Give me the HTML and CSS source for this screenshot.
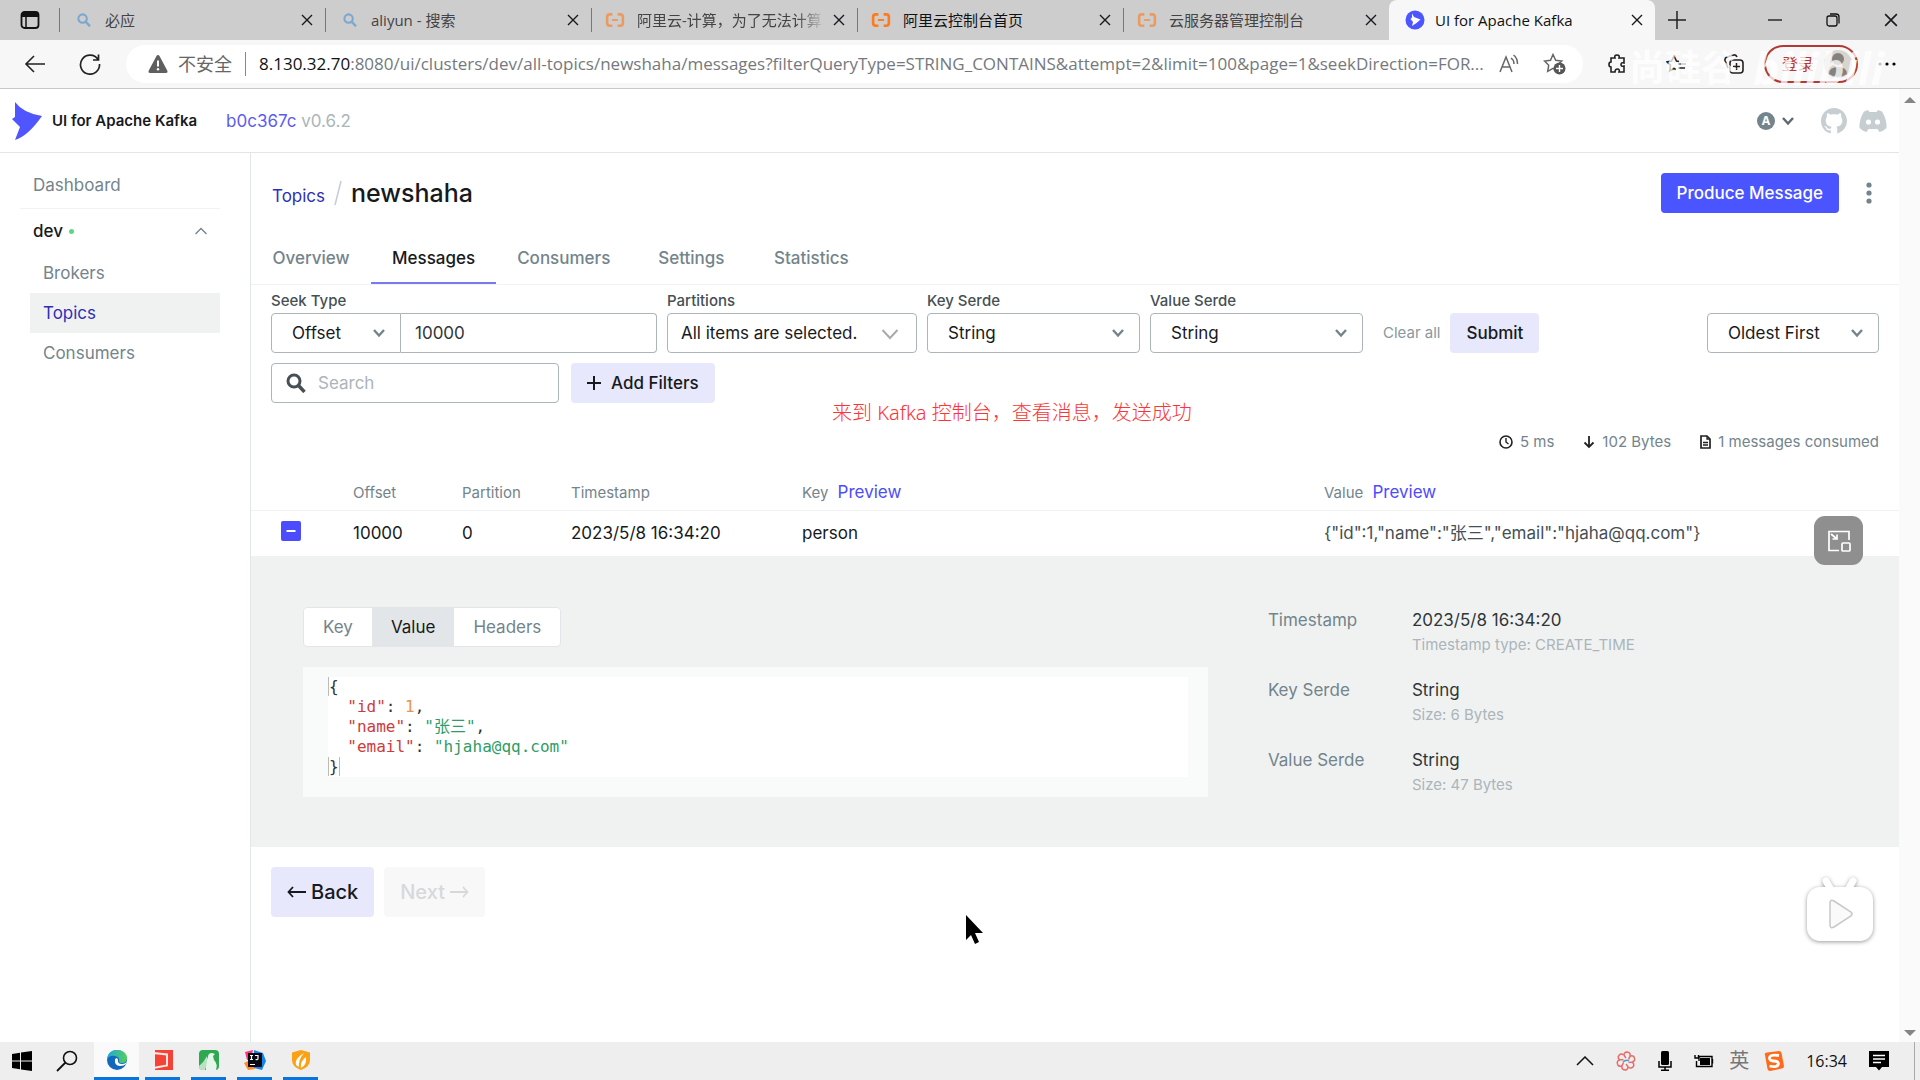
FILE: index.html
```
<!DOCTYPE html>
<html lang="en">
<head>
    <meta charset="UTF-8">
    <meta name="viewport" content="width=device-width, initial-scale=1.0">
    <title>UI for Apache Kafka</title>
    <link rel="stylesheet" href="styles.css">
</head>
<body>
    <!-- shared icons -->
    <svg class="sprite" width="0" height="0" aria-hidden="true">
        <symbol id="i-close" viewBox="0 0 12 12"><path d="M1 1l10 10M11 1L1 11" fill="none" stroke="currentColor" stroke-width="1.4"/></symbol>
        <symbol id="i-chevron" viewBox="0 0 14 10"><path d="M2 2l5 5.5L12 2" fill="none" stroke="currentColor" stroke-width="2.4"/></symbol>
        <symbol id="i-search" viewBox="0 0 20 20"><circle cx="8" cy="8" r="6" fill="none" stroke="currentColor" stroke-width="3"/><path d="M12.5 12.5L18.5 19" stroke="currentColor" stroke-width="3.4"/></symbol>
        <symbol id="i-aliyun" viewBox="0 0 22 16"><path d="M8 1.5H5Q2 1.500 2 4.500v7q0 3 3 3h3M14 1.500h3q3 0 3 3v7q0 3-3 3h-3" fill="none" stroke="currentColor" stroke-width="3"/><path d="M7.500 8h7" stroke="currentColor" stroke-width="2.200"/></symbol>
    </svg>

    <div class="tab-strip">
        <button class="tab-menu" aria-label="Tab actions">
            <svg width="20" height="20" viewBox="0 0 20 20"><rect x="1.500" y="2" width="17" height="16" rx="3" fill="none" stroke="#111" stroke-width="1.800"/><path d="M1.500 4.500Q1.500 2 4 2h12q2.500 0 2.500 2.500V7h-17z" fill="#111"/><path d="M6 7v11" stroke="#111" stroke-width="1.500"/></svg>
        </button>
        <div class="tab">
            <svg class="tab-icon blue" width="14" height="14"><use href="#i-search"/></svg>
            <span class="tab-title">必应</span>
            <button class="tab-close" aria-label="Close"><svg width="12" height="12"><use href="#i-close"/></svg></button>
        </div>
        <div class="tab">
            <svg class="tab-icon blue" width="14" height="14"><use href="#i-search"/></svg>
            <span class="tab-title">aliyun - 搜索</span>
            <button class="tab-close" aria-label="Close"><svg width="12" height="12"><use href="#i-close"/></svg></button>
        </div>
        <div class="tab">
            <svg class="tab-icon orange faded" width="20" height="14"><use href="#i-aliyun"/></svg>
            <span class="tab-title fade-end">阿里云-计算，为了无法计算</span>
            <button class="tab-close" aria-label="Close"><svg width="12" height="12"><use href="#i-close"/></svg></button>
        </div>
        <div class="tab">
            <svg class="tab-icon orange" width="20" height="14"><use href="#i-aliyun"/></svg>
            <span class="tab-title dark">阿里云控制台首页</span>
            <button class="tab-close" aria-label="Close"><svg width="12" height="12"><use href="#i-close"/></svg></button>
        </div>
        <div class="tab">
            <svg class="tab-icon orange faded" width="20" height="14"><use href="#i-aliyun"/></svg>
            <span class="tab-title">云服务器管理控制台</span>
            <button class="tab-close" aria-label="Close"><svg width="12" height="12"><use href="#i-close"/></svg></button>
        </div>
        <div class="tab active">
            <svg class="tab-icon" width="20" height="20" viewBox="0 0 20 20"><circle cx="10" cy="10" r="9.500" fill="#4c55ff"/><path d="M7 3.500l2 3.500 6.500 2.500-4 3.500L7 16l1-4-2.500-3L7 7.500z" fill="#fff"/></svg>
            <span class="tab-title dark">UI for Apache Kafka</span>
            <button class="tab-close" aria-label="Close"><svg width="12" height="12"><use href="#i-close"/></svg></button>
        </div>
        <button class="new-tab" aria-label="New tab"><svg width="18" height="18" viewBox="0 0 18 18"><path d="M9 0v18M0 9h18" stroke="#222" stroke-width="1.500"/></svg></button>
        <div class="window-controls">
            <button aria-label="Minimize"><svg width="14" height="14" viewBox="0 0 14 14"><path d="M0 7h14" stroke="#111" stroke-width="1.300"/></svg></button>
            <button aria-label="Restore"><svg width="14" height="14" viewBox="0 0 14 14"><rect x="1" y="3" width="10" height="10" rx="2" fill="none" stroke="#111" stroke-width="1.300"/><path d="M4 1h6q3 0 3 3v6.500" fill="none" stroke="#111" stroke-width="1.300"/></svg></button>
            <button aria-label="Close window"><svg width="14" height="14"><use href="#i-close"/></svg></button>
        </div>
    </div>

    <div class="toolbar">
        <button aria-label="Back"><svg width="22" height="20" viewBox="0 0 22 20"><path d="M10 2L2 10l8 8M2 10h19" fill="none" stroke="#222" stroke-width="1.600"/></svg></button>
        <button aria-label="Refresh"><svg width="22" height="22" viewBox="0 0 22 22"><path d="M19 6.500A9.500 9.500 0 1 0 20.500 11M19.500 1.500v5.500h-5.500" fill="none" stroke="#222" stroke-width="1.700"/></svg></button>
        <div class="address">
            <svg width="20" height="18" viewBox="0 0 20 18"><path d="M10 0q1 0 1.500 1l8 15q.5 2-1.500 2H2q-2 0-1.500-2l8-15Q9 0 10 0z" fill="#5f5f5f"/><path d="M10 5.500v6" stroke="#fff" stroke-width="2"/><circle cx="10" cy="14.300" r="1.200" fill="#fff"/></svg>
            <span class="insecure">不安全</span>
            <span class="url"><b>8.130.32.70</b>:8080/ui/clusters/dev/all-topics/newshaha/messages?filterQueryType=STRING_CONTAINS&amp;attempt=2&amp;limit=100&amp;page=1&amp;seekDirection=FOR...</span>
            <div class="address-actions">
                <button aria-label="Read aloud"><svg width="20" height="20" viewBox="0 0 20 20"><path d="M1 18L7 3l6 15M3 13h8M12 4q3 2 3 6M14.500 1q4 3 4 9" fill="none" stroke="#666" stroke-width="1.500"/></svg></button>
                <button aria-label="Add to favorites"><svg width="23" height="22" viewBox="0 0 23 22"><path d="M10 1.500l2.700 5.700 6 .8-4.400 4.300 1 6-5.300-2.900-5.300 2.900 1-6L1.500 8l6-.8z" fill="none" stroke="#666" stroke-width="1.500"/><circle cx="16.500" cy="15.500" r="6" fill="#555"/><path d="M16.500 12v7M13 15.500h7" stroke="#fff" stroke-width="1.400"/></svg></button>
            </div>
        </div>
        <div class="toolbar-actions">
            <button aria-label="Extensions"><svg width="20" height="20" viewBox="0 0 20 20"><path d="M3 4h4q-1-3 2-3t2 3h5v5q-3-1-3 1.500t3 1.500v6h-5q1-3-1.500-3T7 18H3v-5q-2 0-2-2.500T3 8z" fill="none" stroke="#222" stroke-width="1.600"/></svg></button>
            <button aria-label="Favorites"><svg width="20" height="20" viewBox="0 0 20 20"><path d="M13 7.500L10.500 7 8 2 5.500 7 1 7.800l3.500 3.500-.8 5.500L8 14.500l2 1M12 10h8M12 14h7" fill="none" stroke="#222" stroke-width="1.600"/></svg></button>
            <button aria-label="Collections"><svg width="20" height="20" viewBox="0 0 20 20"><path d="M4 14L1 6.500Q.5 4 3 3l7-2q2-.5 3 2" fill="none" stroke="#222" stroke-width="1.600"/><rect x="6" y="6" width="13" height="13" rx="3" fill="none" stroke="#222" stroke-width="1.600"/><path d="M12.500 9v7M9 12.500h7" stroke="#222" stroke-width="1.500"/></svg></button>
            <button class="login">登录 <svg width="28" height="30" viewBox="0 0 28 30"><circle cx="14" cy="15" r="14" fill="#d8d4d0"/><circle cx="14" cy="10" r="6" fill="#85817d"/><path d="M5 25q0-7 9-7t9 7q-9 6-18 0z" fill="#85817d"/></svg></button>
            <button aria-label="More"><svg width="18" height="4" viewBox="0 0 18 4"><circle cx="2" cy="2" r="1.600"/><circle cx="9" cy="2" r="1.600"/><circle cx="16" cy="2" r="1.600"/></svg></button>
        </div>
        <div class="watermark"><span>尚硅谷</span><i>bilibili</i></div>
    </div>

    <div class="viewport">
        <div class="page">
            <header class="navbar">
                <a class="brand" href="#">
                    <svg width="30" height="38" viewBox="0 0 30 38"><path d="M3 0q8 11 27 14Q16 34 3 38l5-13-8-8 3-2z" fill="#4f56ff"/></svg>
                    UI for Apache Kafka
                </a>
                <div class="version"><a href="#">b0c367c</a> v0.6.2</div>
                <div class="navbar-links">
                    <button class="theme" aria-label="Theme"><span>A</span><svg width="14" height="10"><use href="#i-chevron"/></svg></button>
                    <a href="#" aria-label="GitHub"><svg width="26" height="26" viewBox="0 0 16 16"><path fill="#c7ced1" d="M8 0C3.580 0 0 3.580 0 8c0 3.540 2.290 6.530 5.470 7.590.4.070.55-.17.55-.38 0-.19-.01-.82-.01-1.490-2.010.37-2.530-.49-2.690-.94-.09-.23-.48-.94-.82-1.130-.28-.15-.68-.52-.01-.53.63-.01 1.080.58 1.230.82.72 1.210 1.870.87 2.330.66.07-.52.28-.87.51-1.070-1.780-.2-3.640-.89-3.640-3.950 0-.87.31-1.590.82-2.150-.08-.2-.36-1.020.08-2.120 0 0 .67-.21 2.200.82.64-.18 1.320-.27 2-.27s1.360.09 2 .27c1.530-1.040 2.200-.82 2.200-.82.44 1.100.16 1.920.08 2.120.51.56.82 1.270.82 2.150 0 3.070-1.870 3.750-3.650 3.950.29.25.54.73.54 1.480 0 1.070-.01 1.930-.01 2.200 0 .21.15.46.55.38A8 8 0 0 0 16 8c0-4.420-3.580-8-8-8z"/></svg></a>
                    <a href="#" aria-label="Discord"><svg width="28" height="24" viewBox="0 0 28 24"><path d="M9 1L5 2.500Q0 10 .5 19q3 3 7 4l2-3h9l2 3q4-1 7-4Q28 10 23 2.500L19 1l-1.500 2h-7z" fill="#c7ced1"/><circle cx="9.500" cy="13" r="2.600" fill="#fff"/><circle cx="18.500" cy="13" r="2.600" fill="#fff"/></svg></a>
                </div>
            </header>

            <div class="layout">
                <nav class="sidebar">
                    <a class="dashboard" href="#">Dashboard</a>
                    <button class="cluster">dev <span class="status"></span>
                        <svg width="14" height="8" viewBox="0 0 14 8"><path d="M1.500 7L7 1.500 12.500 7" fill="none" stroke="#73848c" stroke-width="1.400"/></svg>
                    </button>
                    <a class="item" href="#">Brokers</a>
                    <a class="item current" href="#">Topics</a>
                    <a class="item" href="#">Consumers</a>
                </nav>

                <main>
                    <div class="heading">
                        <a href="#">Topics</a>
                        <svg class="slash" width="8" height="26" viewBox="0 0 8 26"><path d="M7 1L1 25" stroke="#c7ced1" stroke-width="1.500"/></svg>
                        <h1>newshaha</h1>
                        <button class="btn primary">Produce Message</button>
                        <button class="kebab" aria-label="Actions"><svg width="6" height="22" viewBox="0 0 6 22"><g fill="#73848c"><circle cx="3" cy="3" r="2.600"/><circle cx="3" cy="11" r="2.600"/><circle cx="3" cy="19" r="2.600"/></g></svg></button>
                    </div>

                    <nav class="topic-tabs">
                        <a href="#">Overview</a>
                        <a class="current" href="#">Messages</a>
                        <a href="#">Consumers</a>
                        <a href="#">Settings</a>
                        <a href="#">Statistics</a>
                    </nav>

                    <div class="filters">
                        <div class="field">
                            <label for="seek">Seek Type</label>
                            <div class="seek">
                                <div class="select seek-type"><select id="seek"><option>Offset</option></select><svg width="14" height="10"><use href="#i-chevron"/></svg></div>
                                <input type="text" value="10000" aria-label="Offset">
                            </div>
                        </div>
                        <div class="field">
                            <label for="partitions">Partitions</label>
                            <div class="select partitions"><select id="partitions"><option>All items are selected.</option></select><svg width="18" height="12" viewBox="0 0 18 12"><path d="M1.500 2L9 10l7.500-8" fill="none" stroke="#aaa" stroke-width="2"/></svg></div>
                        </div>
                        <div class="field">
                            <label for="key-serde">Key Serde</label>
                            <div class="select serde"><select id="key-serde"><option>String</option></select><svg width="14" height="10"><use href="#i-chevron"/></svg></div>
                        </div>
                        <div class="field">
                            <label for="value-serde">Value Serde</label>
                            <div class="select serde"><select id="value-serde"><option>String</option></select><svg width="14" height="10"><use href="#i-chevron"/></svg></div>
                        </div>
                        <button class="clear">Clear all</button>
                        <button class="btn">Submit</button>
                        <div class="select order"><select aria-label="Order"><option>Oldest First</option></select><svg width="14" height="10"><use href="#i-chevron"/></svg></div>
                    </div>

                    <div class="search-row">
                        <div class="search">
                            <svg width="20" height="20"><use href="#i-search"/></svg>
                            <input type="text" placeholder="Search" aria-label="Search">
                        </div>
                        <button class="btn add"><svg width="14" height="14" viewBox="0 0 14 14"><path d="M7 0v14M0 7h14" stroke="#171a1c" stroke-width="2"/></svg>Add Filters</button>
                    </div>

                    <div class="metrics">
                        <span><svg width="14" height="14" viewBox="0 0 14 14"><circle cx="7" cy="7" r="6" fill="none" stroke="#222" stroke-width="1.600"/><path d="M7 3v4l2.500 2" fill="none" stroke="#222" stroke-width="1.400"/></svg>5 ms</span>
                        <span><svg width="12" height="14" viewBox="0 0 12 14"><path d="M6 1v11M1.500 7.500L6 12l4.500-4.500" fill="none" stroke="#222" stroke-width="1.800"/></svg>102 Bytes</span>
                        <span><svg width="11" height="14" viewBox="0 0 11 14"><path d="M1 1h6l3 3v9H1z" fill="none" stroke="#222" stroke-width="1.700"/><path d="M7 1v3h3M3 7.500h5M3 10h5" fill="none" stroke="#222" stroke-width="1.300"/></svg>1 messages consumed</span>
                    </div>

                    <table class="messages">
                        <colgroup><col class="c-toggle"><col class="c-offset"><col class="c-offset"><col class="c-time"><col class="c-key"><col></colgroup>
                        <thead>
                            <tr><th></th><th>Offset</th><th>Partition</th><th>Timestamp</th><th>Key <button class="preview">Preview</button></th><th>Value <button class="preview">Preview</button></th></tr>
                        </thead>
                        <tbody>
                            <tr>
                                <td class="toggle-cell"><button class="toggle" aria-label="Collapse"><svg width="20" height="20" viewBox="0 0 20 20"><rect width="20" height="20" rx="2" fill="#4c4cff"/><path d="M5.500 10h9" stroke="#fff" stroke-width="2"/></svg></button></td>
                                <td>10000</td>
                                <td>0</td>
                                <td>2023/5/8 16:34:20</td>
                                <td>person</td>
                                <td class="json">{"id":1,"name":"张三","email":"hjaha@qq.com"}</td>
                            </tr>
                            <tr>
                                <td class="detail" colspan="6">
                                    <div class="detail-grid">
                                        <section>
                                            <div class="switch">
                                                <button>Key</button><button class="on">Value</button><button>Headers</button>
                                            </div>
                                            <div class="editor">
                                                <div class="code">
                                                    <div class="line"><span class="caret">{</span></div>
                                                    <div class="line indent"><span class="k">"id"</span><span>: </span><span class="n">1</span><span>,</span></div>
                                                    <div class="line indent"><span class="k">"name"</span><span>: </span><span class="s">"张三"</span><span>,</span></div>
                                                    <div class="line indent"><span class="k">"email"</span><span>: </span><span class="s">"hjaha@qq.com"</span></div>
                                                    <div class="line"><span class="caret end">}</span></div>
                                                </div>
                                            </div>
                                        </section>
                                        <dl class="meta">
                                            <dt>Timestamp</dt><dd>2023/5/8 16:34:20<small>Timestamp type: CREATE_TIME</small></dd>
                                            <dt>Key Serde</dt><dd>String<small>Size: 6 Bytes</small></dd>
                                            <dt>Value Serde</dt><dd>String<small>Size: 47 Bytes</small></dd>
                                        </dl>
                                    </div>
                                </td>
                            </tr>
                        </tbody>
                    </table>

                    <div class="pagination">
                        <button class="btn large"><svg width="19" height="12" viewBox="0 0 19 12"><path d="M6 1L1.500 6 6 11M2 6h17" fill="none" stroke="currentColor" stroke-width="1.800"/></svg>Back</button>
                        <button class="btn large" disabled>Next<svg width="19" height="12" viewBox="0 0 19 12"><path d="M13 1l4.500 5-4.500 5M17 6H0" fill="none" stroke="currentColor" stroke-width="1.800"/></svg></button>
                    </div>
                </main>
            </div>
        </div>

        <div class="scrollbar">
            <svg width="12" height="6" viewBox="0 0 12 6"><path d="M0 6l6-6 6 6z" fill="#858585"/></svg>
            <svg width="12" height="6" viewBox="0 0 12 6"><path d="M0 0l6 6 6-6z" fill="#858585"/></svg>
        </div>
    </div>

    <footer class="taskbar">
        <button aria-label="Start"><svg width="20" height="20" viewBox="0 0 20 20"><path d="M0 3l8-1.200v7.700H0zM9 1.600L20 0v9.500H9zM0 10.500h8v7.700L0 17zM9 10.500h11V20L9 18.400z"/></svg></button>
        <button class="find" aria-label="Search"><svg width="22" height="22" viewBox="0 0 22 22"><circle cx="14" cy="8" r="6.500" fill="none" stroke="#111" stroke-width="1.600"/><path d="M9.500 12.500L1 21" stroke="#111" stroke-width="1.800"/></svg></button>
        <button class="app front" aria-label="Edge"><svg width="20" height="20" viewBox="0 0 20 20"><defs><linearGradient id="edge" x1="0" y1="0" x2="1" y2="0"><stop offset="0" stop-color="#20a7dc"/><stop offset="1" stop-color="#53cf58"/></linearGradient></defs><circle cx="10" cy="10" r="10" fill="#1268bd"/><path d="M0 9Q1 0 10 0q9 0 10 8 0 5-5 5-3 0-3-2 1-4-4-5Q3 5 0 9z" fill="url(#edge)"/><path d="M8 9q-1 7 5 7 4 0 6-2l1-3q-1 3-5 3-4 0-4-3 0-2-1-3z" fill="#fff"/></svg></button>
        <button class="app" aria-label="Reader"><svg width="20" height="20" viewBox="0 0 20 20"><path d="M2 0h18v20H2z" fill="#f44336"/><path d="M0 3l14 1.500v11L0 18" fill="none" stroke="#ffe9e4" stroke-width="2"/></svg></button>
        <button class="app" aria-label="Editor"><svg width="20" height="20" viewBox="0 0 20 20"><rect width="20" height="20" rx="4" fill="#2fa852"/><path d="M9 7q0-4 4-4l3 1-2 2 1 4q4 4 2 10H7q-1-7 2-13z" fill="#e6f5ea"/><path d="M0 16Q5 12 8 6q1 5-2 14H3q-3 0-3-4z" fill="#b9e2c5"/></svg></button>
        <button class="app" aria-label="IDE"><svg width="22" height="20" viewBox="0 0 22 20"><path d="M1 2l8-2-2 9-4 1z" fill="#ff3680"/><path d="M10 0l9 3 3 8-4 9-8-2z" fill="#1685e8"/><path d="M0 13l6-3 5 9-7 1z" fill="#ff8b22"/><rect x="4" y="3" width="14" height="14" fill="#0a0a14"/><path d="M6 5.500h3M7.500 5.500v4M6 9.500h3M11 5.500h3v3q0 1.500-2.500 1M6 14.500h5" fill="none" stroke="#fff" stroke-width="1.200"/></svg></button>
        <button class="app" aria-label="Shield"><svg width="18" height="20" viewBox="0 0 18 20"><path d="M9 0l9 2.500V10q0 7-9 10-9-3-9-10V2.500z" fill="#fba116"/><path d="M12 3Q2 9 4 15l3 2Q6 10 12 3zM14 7q-6 4-5 11 6-3 5-11z" fill="#fff"/></svg></button>
        <div class="tray">
            <svg width="18" height="10" viewBox="0 0 18 10"><path d="M1 9l8-8 8 8" fill="none" stroke="#111" stroke-width="1.500"/></svg>
            <svg class="flower" width="20" height="20" viewBox="0 0 20 20"><g fill="none" stroke="#e86b65" stroke-width="1.500"><path id="petal" d="M10 7q-4-4 0-6 5 0 4 4"/><use href="#petal" transform="rotate(60 10 10)"/><use href="#petal" transform="rotate(120 10 10)"/><use href="#petal" transform="rotate(180 10 10)"/><use href="#petal" transform="rotate(240 10 10)"/><use href="#petal" transform="rotate(300 10 10)"/></g><path d="M7 11q3-3 6-1" stroke="#4a9ad8" stroke-width="1.500" fill="none"/></svg>
            <svg width="14" height="20" viewBox="0 0 14 20"><rect x="3" width="8" height="14" rx="1.500"/><path d="M1 10v6h12v-6M7 16v3M3 19.200h8" fill="none" stroke="#000" stroke-width="1.500"/></svg>
            <svg width="20" height="14" viewBox="0 0 20 14"><rect x="6" y="4" width="10" height="7"/><path d="M5 7V2.500h13v10H5M18.500 5v4.500M2.500 7v5.500H5M1 1v3h3.500V1" fill="none" stroke="#000" stroke-width="1.400"/></svg>
            <span class="ime">英</span>
            <svg width="20" height="20" viewBox="0 0 20 20"><path d="M1 4Q0 2 3 1.500L15 0q2 0 2.500 2L20 15q0 2-2 2.500L6 20q-2 0-2.500-2z" fill="#ff6a1c"/><path d="M15 4.500Q5 3 5.500 7.500 6 10 10 10t4.500 2.500Q14 17 5.500 15" fill="none" stroke="#fff" stroke-width="2.800"/></svg>
            <time>16:34</time>
            <svg width="20" height="20" viewBox="0 0 20 20"><path d="M0 0h20v16h-7l-3 3.500L7 16H0z"/><path d="M4 4.500h12M4 8h12M4 11.500h8" stroke="#fff" stroke-width="1.300"/></svg>
        </div>
    </footer>

    <p class="caption">来到 Kafka 控制台，查看消息，发送成功</p>
    <button class="pip" aria-label="Picture in picture"><svg width="24" height="22" viewBox="0 0 24 22"><path d="M12 20.500H2V1.500h20V10M4 4l6 5M10 4.500V9H5.500" fill="none" stroke="#fff" stroke-width="1.700"/><rect x="15" y="13" width="8" height="8" rx="1" fill="none" stroke="#fff" stroke-width="1.700"/></svg></button>
    <svg class="bili" width="76" height="76" viewBox="0 0 76 76"><path d="M24 11l4 7M51 11l-4 7" stroke="#fff" stroke-width="7" stroke-linecap="round"/><rect x="5" y="17" width="66" height="54" rx="13" fill="#fff"/><path d="M28 33q0-4 4-2l17 11q2 2 0 4L32 57q-4 2-4-2z" fill="#fafafa" stroke="#c8c8c8" stroke-width="1.500"/></svg>
    <svg class="cursor" width="18" height="30" viewBox="0 0 18 30"><path d="M0 0v25l5-5 4 9 4-2-4-9h8z"/></svg>
</body>
</html>
```
FILE: styles.css
```
* {
    box-sizing: border-box;
}

body {
    margin: 0;
    height: 100vh;
    display: flex;
    flex-direction: column;
    position: relative;
    overflow: hidden;
    background: #fff;
    color: #171a1c;
    font-family: Inter, "Noto Sans CJK SC", sans-serif;
    font-size: 17px;
    line-height: 24px;
}

a {
    color: inherit;
    text-decoration: none;
}

button {
    border: none;
    padding: 0;
    background: none;
    color: inherit;
    font: inherit;
    cursor: pointer;
}

svg {
    display: block;
    flex-shrink: 0;
}

.sprite {
    position: absolute;
}

/* browser tabs */
.tab-strip {
    display: flex;
    height: 40px;
    flex-shrink: 0;
    background: #cdcdcd;
    font-family: "Open Sans", "Noto Sans CJK SC", sans-serif;
    font-size: 15px;
}

.tab-menu {
    width: 59px;
    padding-left: 20px;
}

.tab {
    display: flex;
    align-items: center;
    width: 266px;
    padding: 0 8px 0 16px;
    position: relative;
}

.tab::before {
    content: "";
    position: absolute;
    left: 0;
    top: 8px;
    height: 24px;
    border-left: 1px solid #777;
}

.tab.active {
    background: #f7f7f7;
    border-radius: 8px 8px 0 0;
}

.tab.active::before {
    display: none;
}

.tab-icon {
    margin-right: 10px;
}

.tab-icon.blue {
    color: #7ba7d0;
    margin: 0 14px 0 2px;
}

.tab-icon.orange {
    color: #ff7a1a;
    margin: 0 12px 0 -2px;
}

.tab-icon.faded {
    opacity: 0.6;
}

.tab-title {
    flex: 1;
    white-space: nowrap;
    color: #444;
}

.tab-title.dark {
    color: #111;
}

.fade-end {
    -webkit-mask-image: linear-gradient(90deg, #000 85%, transparent);
    mask-image: linear-gradient(90deg, #000 85%, transparent);
}

.tab-close {
    padding: 4px;
    margin-left: 4px;
}

.new-tab {
    padding: 0 13px;
}

.window-controls {
    display: flex;
    margin-left: auto;
}

.window-controls button {
    width: 58px;
    display: flex;
    align-items: center;
    justify-content: center;
}

/* address bar */
.toolbar {
    display: flex;
    align-items: center;
    height: 49px;
    flex-shrink: 0;
    padding-left: 24px;
    gap: 33px;
    background: #f7f7f7;
    border-bottom: 1px solid #c8c8c8;
    position: relative;
    font-family: "Open Sans", "Noto Sans CJK SC", sans-serif;
}

.address {
    flex: 1;
    display: flex;
    align-items: center;
    height: 38px;
    margin-left: -8px;
    padding: 0 17px 0 22px;
    border-radius: 19px;
    background: #fff;
    min-width: 0;
}

.insecure {
    margin: 0 13px 0 10px;
    padding-right: 13px;
    border-right: 1px solid #888;
    font-size: 18px;
    color: #666;
}

.url {
    flex: 1;
    white-space: nowrap;
    color: #75797d;
}

.url b {
    font-weight: 400;
    color: #111;
}

.address-actions {
    display: flex;
    align-items: center;
    gap: 24px;
    margin-left: 8px;
}

.toolbar-actions {
    display: flex;
    align-items: center;
    gap: 38px;
    padding-right: 24px;
    margin-left: -8px;
}

.login {
    display: flex;
    align-items: center;
    gap: 10px;
    height: 38px;
    margin: 0 -18px;
    padding: 0 4px 0 16px;
    border: 2px solid #b33a33;
    border-radius: 19px;
    font-size: 16px;
    color: #b33a33;
}

.watermark {
    position: absolute;
    right: 36px;
    top: 0;
    display: flex;
    align-items: center;
    gap: 16px;
    color: rgba(255, 255, 255, 0.75);
    font-size: 36px;
    font-weight: 700;
    pointer-events: none;
    line-height: 56px;
    z-index: 2;
}

.watermark i {
    font-size: 44px;
}

/* kafka ui */
.viewport {
    flex: 1;
    display: flex;
    min-height: 0;
}

.page {
    flex: 1;
    display: flex;
    flex-direction: column;
    min-width: 0;
}

.scrollbar {
    width: 21px;
    padding: 8px 5px 6px;
    display: flex;
    flex-direction: column;
    justify-content: space-between;
    background: #fafafa;
}

.navbar {
    display: flex;
    align-items: center;
    height: 64px;
    padding: 0 12px;
    border-bottom: 1px solid #e3e6e8;
}

.brand {
    display: flex;
    align-items: center;
    gap: 10px;
    margin-right: 29px;
    font-size: 15px;
    font-weight: 600;
}

.version {
    color: #abb5ba;
}

.version a {
    color: #5c5cf0;
}

.navbar-links {
    display: flex;
    align-items: center;
    gap: 12px;
    margin-left: auto;
}

.theme {
    display: flex;
    align-items: center;
    gap: 6px;
    margin-right: 14px;
    color: #5c6970;
}

.theme span {
    width: 18px;
    height: 18px;
    border-radius: 50%;
    background: #73848c;
    color: #fff;
    font-size: 12px;
    font-weight: 700;
    line-height: 18px;
}

.layout {
    flex: 1;
    display: flex;
    min-height: 0;
}

.sidebar {
    width: 251px;
    padding: 12px 30px 0 20px;
    border-right: 1px solid #e3e6e8;
    color: #73848c;
}

.dashboard {
    display: block;
    padding: 8px 13px 11px;
    border-bottom: 1px solid #f1f2f3;
}

.cluster {
    display: flex;
    align-items: center;
    width: 100%;
    height: 44px;
    padding: 0 12px 0 13px;
    color: #171a1c;
    font-weight: 500;
}

.cluster svg {
    margin-left: auto;
}

.status {
    width: 5px;
    height: 5px;
    margin-left: 6px;
    border-radius: 50%;
    background: #5cd685;
}

.item {
    display: block;
    margin-left: 10px;
    padding: 8px 13px;
}

.item.current {
    background: #f0f2f2;
    color: #2f2fb5;
}

main {
    flex: 1;
    min-width: 0;
}

.heading {
    display: flex;
    align-items: center;
    height: 80px;
    padding: 0 27px 0 21px;
}

.heading a {
    color: #2f2fb5;
    padding-top: 5px;
}

.slash {
    margin: 0 9px;
}

h1 {
    margin: 0;
    font-size: 25px;
    font-weight: 500;
}

.kebab {
    margin-left: 27px;
}

.btn {
    display: flex;
    align-items: center;
    gap: 10px;
    height: 40px;
    padding: 0 16px;
    border-radius: 4px;
    background: #e8e8fc;
    color: #171a1c;
    font-weight: 500;
}

.btn.primary {
    margin-left: auto;
    background: #4a54ff;
    color: #fff;
}

.topic-tabs {
    display: flex;
    height: 52px;
    border-bottom: 1px solid #f1f2f3;
}

.topic-tabs a {
    min-width: 120px;
    padding: 13px 21px 0;
    text-align: center;
    color: #73848c;
    font-weight: 500;
}

.topic-tabs .current {
    color: #171a1c;
    border-bottom: 2px solid #7a7af0;
}

.filters {
    display: flex;
    align-items: flex-end;
    gap: 10px;
    padding: 6px 20px 0;
}

.field label {
    display: block;
    line-height: 20px;
    margin-bottom: 2px;
    color: #454f54;
    font-size: 15px;
    font-weight: 500;
}

.seek {
    display: flex;
    width: 386px;
}

.seek input {
    flex: 1;
    min-width: 0;
    height: 40px;
    padding: 0 14px;
    border: 1px solid #abb5ba;
    border-left: none;
    border-radius: 0 4px 4px 0;
    font: inherit;
    color: #2f3639;
}

.select {
    position: relative;
}

.select select {
    appearance: none;
    display: block;
    width: 100%;
    height: 40px;
    padding: 0 20px;
    border: 1px solid #abb5ba;
    border-radius: 4px;
    background: #fff;
    color: #171a1c;
    font: inherit;
}

.select svg {
    position: absolute;
    right: 15px;
    top: 15px;
    color: #73848c;
    pointer-events: none;
}

.seek-type {
    width: 130px;
}

.seek-type select {
    border-radius: 4px 0 0 4px;
}

.partitions {
    width: 250px;
}

.partitions select {
    padding: 0 13px;
}

.partitions svg {
    right: 18px;
}

.serde {
    width: 213px;
}

.order {
    width: 172px;
    margin-left: auto;
}

.clear {
    height: 40px;
    margin-left: 10px;
    font-size: 15px;
    color: #8a979e;
}

.search-row {
    display: flex;
    gap: 12px;
    padding: 10px 20px 0;
}

.search {
    display: flex;
    align-items: center;
    width: 288px;
    height: 40px;
    padding: 0 14px;
    gap: 12px;
    border: 1px solid #abb5ba;
    border-radius: 4px;
    color: #454f54;
}

.search input {
    min-width: 0;
    border: none;
    padding: 0;
    outline: none;
    font: inherit;
}

.search input::placeholder {
    color: #abb5ba;
}

.metrics {
    display: flex;
    justify-content: flex-end;
    gap: 29px;
    padding: 27px 20px 0;
    color: #73848c;
    font-size: 15px;
}

.metrics span {
    display: flex;
    align-items: center;
    gap: 7px;
}

.messages {
    width: 100%;
    margin-top: 19px;
    table-layout: fixed;
    border-collapse: collapse;
}

.c-toggle {
    width: 92px;
}

.c-offset {
    width: 109px;
}

.c-time {
    width: 231px;
}

.c-key {
    width: 522px;
}

.messages th {
    height: 37px;
    padding: 3px 10px 0;
    border-bottom: 1px solid #f1f2f3;
    color: #73848c;
    font-size: 15px;
    font-weight: 400;
    text-align: left;
}

.messages td {
    height: 46px;
    padding: 0 10px;
}

.messages .toggle-cell {
    padding-bottom: 5px;
}

.messages .json {
    color: #454f54;
}

.preview {
    margin-left: 5px;
    color: #4c4cff;
    font-size: 17px;
}

.toggle {
    display: block;
    margin-left: 20px;
}

.messages .detail {
    padding: 51px 52px 29px;
    background: #f0f2f2;
    vertical-align: top;
}

.detail-grid {
    display: grid;
    grid-template-columns: 25fr 16fr;
    gap: 60px;
}

.switch {
    display: flex;
    width: fit-content;
    height: 40px;
    border: 1px solid #e3e6e8;
    border-radius: 4px;
    background: #fff;
    overflow: hidden;
}

.switch button {
    padding: 0 19px;
    color: #73848c;
}

.switch .on {
    background: #e3e6e8;
    color: #171a1c;
}

.editor {
    margin-top: 20px;
    padding: 10px 20px 20px 25px;
    background: #f9fafa;
}

.code {
    background: #fff;
    color: #333;
    font-family: "DejaVu Sans Mono", "Noto Sans CJK SC", monospace;
    font-size: 16px;
}

.line {
    height: 20px;
    line-height: 20px;
    white-space: pre;
}

.line.indent {
    padding-left: 2ch;
}

.k {
    color: #cc3c3c;
}

.n {
    color: #f0914a;
}

.s {
    color: #2f9c66;
}

.caret {
    border-left: 1px solid #bbb;
}

.caret.end {
    border-right: 1px solid #bbb;
}

.meta {
    display: grid;
    grid-template-columns: 144px 1fr;
    grid-auto-rows: 70px;
    align-content: start;
    margin: 1px 0 0;
}

.meta dt {
    color: #73848c;
}

.meta dd {
    margin: 0;
    color: #2f3639;
}

.meta small {
    display: block;
    margin-top: 1px;
    color: #abb5ba;
    font-size: 15px;
}

.pagination {
    display: flex;
    gap: 10px;
    padding: 20px;
}

.btn.large {
    height: 50px;
    gap: 5px;
    font-size: 20px;
}

.btn:disabled {
    background: #f8f8f8;
    color: #d5d9db;
}

/* windows taskbar */
.taskbar {
    display: flex;
    align-items: center;
    gap: 11px;
    height: 38px;
    flex-shrink: 0;
    padding-left: 12px;
    background: #eee;
}

.find {
    margin: 0 5px 0 13px;
}

.app {
    display: flex;
    align-items: center;
    justify-content: center;
    width: 35px;
    height: 38px;
    border-bottom: 3px solid #0a74da;
}

.app.front {
    width: 45px;
    margin-right: -5px;
    background: #fafafa;
}

.tray {
    display: flex;
    align-items: center;
    gap: 22px;
    height: 38px;
    margin: 0 5px 0 auto;
    padding-right: 25px;
    border-right: 1px solid #aaa;
}

.ime {
    margin: 0 -7px;
    color: #777;
    font-size: 20px;
}

.tray time {
    font-family: "Open Sans", sans-serif;
    font-size: 16px;
    color: #111;
}

/* overlays */
.caption {
    position: absolute;
    left: 832px;
    top: 399px;
    margin: 0;
    color: #ff3333;
    font-family: "Noto Sans", "Noto Sans CJK SC", sans-serif;
    font-size: 20px;
    font-weight: 300;
    line-height: 28px;
}

.pip {
    position: absolute;
    right: 57px;
    top: 516px;
    display: flex;
    align-items: center;
    justify-content: center;
    width: 49px;
    height: 49px;
    border-radius: 11px;
    background: #8f8f8f;
}

.bili {
    position: absolute;
    right: 42px;
    top: 870px;
    filter: drop-shadow(0 1px 2px rgba(0, 0, 0, 0.4));
}

.cursor {
    position: absolute;
    left: 966px;
    top: 915px;
}
```
